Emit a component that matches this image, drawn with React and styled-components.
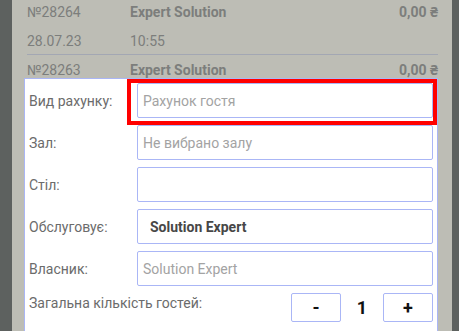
import React from 'react'
import styled, { createGlobalStyle } from 'styled-components'

const GlobalStyle = createGlobalStyle`
  html, body {
    margin: 0;
    padding: 0;
    background: #bdbdb5;
    font-family: Roboto, "Noto Sans", "DejaVu Sans", sans-serif;
  }
`

const Screen = styled.div`
  display: flex;
  width: 459px;
  height: 331px;
  overflow: hidden;
  background: #bdbdb5;
`

const Edge = styled.div`
  flex: 0 0 ${props => props.w}px;
  background: #5d615f;
`

const Main = styled.div`
  flex: 1;
  min-width: 0;
  padding: 0 14px 0 12px;
  display: flex;
  flex-direction: column;
`

const List = styled.div`
  padding-left: 3px;
  display: flex;
  flex-direction: column;
`

const Row = styled.div`
  display: grid;
  grid-template-columns: 103px 1fr auto;
  height: ${props => props.h || 24}px;
  line-height: 24px;
  margin-top: ${props => props.mt || 0}px;
  font-size: 14px;
  color: #7c7e7c;
  overflow: visible;
`

const Cell = styled.span`
  font-weight: ${props => (props.bold ? 700 : 400)};
  text-align: ${props => (props.right ? 'right' : 'left')};
  white-space: nowrap;
`

const Divider = styled.div`
  height: 1px;
  background: #a3a7b3;
  margin: 1px 0 3px;
`

const Panel = styled.div`
  position: relative;
  z-index: 1;
  background: #fff;
  border: 1px solid #aab6f6;
  border-bottom: none;
  padding: 4px 4px 0 4px;
  display: flex;
  flex-direction: column;
  gap: 7px;
  flex: 1;
`

const Field = styled.div`
  position: relative;
  display: grid;
  grid-template-columns: 108px 1fr;
  align-items: center;
  height: 35px;
`

const Label = styled.span`
  font-size: 14px;
  color: #6b6b6b;
  white-space: nowrap;
`

const Box = styled.div`
  height: 35px;
  box-sizing: border-box;
  border: 1px solid #aab6f6;
  border-radius: 2px;
  display: flex;
  align-items: center;
  padding-left: ${props => (props.bold ? 12 : 5)}px;
  font-size: 14px;
  font-weight: ${props => (props.bold ? 700 : 400)};
  color: ${props => (props.bold ? '#474747' : '#a3a3a3')};
  white-space: nowrap;
`

const Highlight = styled.div`
  position: absolute;
  left: 98px;
  right: -4px;
  top: -4px;
  bottom: -7px;
  border: 4px solid #ff0000;
  pointer-events: none;
`

const GuestsRow = styled.div`
  display: flex;
  justify-content: space-between;
  align-items: flex-start;
  height: 29px;
`

const GuestsLabel = styled(Label)`
  line-height: 20px;
`

const Counter = styled.div`
  display: flex;
  align-items: center;
`

const StepButton = styled.button`
  width: 50px;
  height: 29px;
  box-sizing: border-box;
  border: 1px solid #aab6f6;
  border-radius: 2px;
  background: #fff;
  font-family: inherit;
  font-size: 18px;
  font-weight: 700;
  color: #111;
  padding: 0;
  cursor: pointer;
`

const Count = styled.span`
  width: 42px;
  text-align: center;
  font-size: 18px;
  font-weight: 700;
  color: #111;
`

const fields = [
  { label: 'Вид рахунку:', value: 'Рахунок гостя', marked: true },
  { label: 'Зал:', value: 'Не вибрано залу' },
  { label: 'Стіл:', value: '' },
  { label: 'Обслуговує:', value: 'Solution Expert', bold: true },
  { label: 'Власник:', value: 'Solution Expert' },
]

const App = () => {
  return (
    <Screen>
      <GlobalStyle />
      <Edge w={12} />
      <Main>
        <List>
          <Row>
            <Cell>№28264</Cell>
            <Cell bold>Expert Solution</Cell>
            <Cell bold right>0,00 ₴</Cell>
          </Row>
          <Row mt={5}>
            <Cell>28.07.23</Cell>
            <Cell>10:55</Cell>
          </Row>
          <Divider />
          <Row h={20} mt={0}>
            <Cell>№28263</Cell>
            <Cell bold>Expert Solution</Cell>
            <Cell bold right>0,00 ₴</Cell>
          </Row>
        </List>
        <Panel>
          {fields.map(f => (
            <Field key={f.label}>
              <Label>{f.label}</Label>
              <Box bold={f.bold}>{f.value}</Box>
              {f.marked && <Highlight />}
            </Field>
          ))}
          <GuestsRow>
            <GuestsLabel>Загальна кількість гостей:</GuestsLabel>
            <Counter>
              <StepButton>-</StepButton>
              <Count>1</Count>
              <StepButton>+</StepButton>
            </Counter>
          </GuestsRow>
        </Panel>
      </Main>
      <Edge w={7} />
    </Screen>
  )
}

export default App
